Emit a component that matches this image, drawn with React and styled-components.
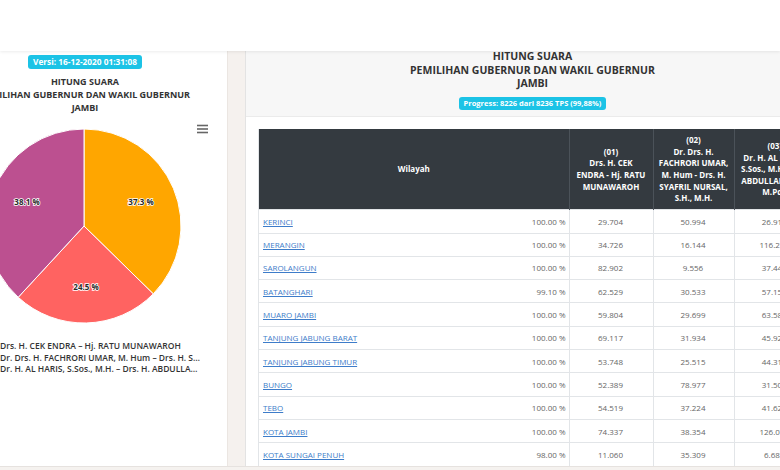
import React from "react";
import styled, { createGlobalStyle } from "styled-components";

const GlobalStyle = createGlobalStyle`
  *, *::before, *::after {
    box-sizing: border-box;
  }
  html, body {
    margin: 0;
    padding: 0;
    background: #f5f2ef;
    font-family: "Open Sans", "Liberation Sans", sans-serif;
    overflow: hidden;
  }
`;

const Page = styled.div`
  width: 780px;
  height: 470px;
  overflow: hidden;
`;

const TopBar = styled.div`
  height: 51px;
  background: #ffffff;
  box-shadow: 0 1px 3px rgba(0, 0, 0, 0.08);
  position: relative;
  z-index: 2;
`;

const Main = styled.div`
  display: flex;
  height: 416px;
  border-bottom: 1px solid #e6e2df;
`;

const LeftPanel = styled.div`
  flex: 0 0 228px;
  background: #ffffff;
  border-right: 1px solid #ebe6e2;
  overflow: hidden;
`;

const LeftInner = styled.div`
  width: 284px;
  margin-left: -57px;
  display: flex;
  flex-direction: column;
  align-items: center;
`;

const Badge = styled.div`
  background: #1cc3e6;
  color: #ffffff;
  font-weight: 700;
  font-size: ${(p) => p.size || 8}px;
  line-height: ${(p) => p.h || 14}px;
  padding: 0 5px;
  border-radius: 3px;
  margin-top: ${(p) => p.top || 0}px;
  white-space: nowrap;
`;

const Title = styled.div`
  text-align: center;
  font-weight: 700;
  color: #333333;
  font-size: ${(p) => p.size}px;
  line-height: ${(p) => p.lh}px;
  margin-top: ${(p) => p.top || 0}px;
  white-space: nowrap;
`;

const Chart = styled.svg`
  display: block;
`;

const Legend = styled.div`
  align-self: flex-start;
  padding-left: 44px;
  margin-top: 6px;
`;

const LegendItem = styled.div`
  display: flex;
  align-items: center;
  gap: 4px;
  height: 11.5px;
`;

const Dot = styled.span`
  width: 9px;
  height: 9px;
  border-radius: 50%;
  background: ${(p) => p.color};
  flex: 0 0 9px;
`;

const LegendText = styled.span`
  max-width: 200px;
  overflow: hidden;
  text-overflow: ellipsis;
  white-space: nowrap;
  font-size: 8.5px;
  font-weight: 600;
  color: #333333;
`;

const Gutter = styled.div`
  flex: 0 0 17px;
  background: #f5f1ee;
`;

const Card = styled.div`
  flex: 0 0 574px;
  background: #ffffff;
  border-left: 1px solid #e3e3e3;
  display: flex;
  flex-direction: column;
`;

const CardHeader = styled.div`
  height: 66px;
  background: #f7f7f7;
  border-bottom: 1px solid #ebebeb;
  display: flex;
  flex-direction: column;
  align-items: center;
`;

const CardBody = styled.div`
  padding: 12px 0 0 12px;
`;

const TableFrame = styled.div`
  border-left: 1px solid #e2e5e8;
`;

const Table = styled.table`
  border-collapse: collapse;
  table-layout: fixed;
  width: 556px;
  font-size: 8px;
`;

const Th = styled.th`
  background: #343a40;
  color: #ffffff;
  font-weight: 700;
  line-height: 11.6px;
  text-align: center;
  vertical-align: middle;
  padding: 0 3px;
  border-left: 1px solid #4b5259;
  &:first-child {
    border-left: none;
  }
`;

const HeadRow = styled.tr`
  height: 81px;
`;

const Row = styled.tr`
  height: 23.3px;
`;

const Td = styled.td`
  border-top: 1px solid #e2e5e8;
  border-left: ${(p) => (p.split ? "1px solid #e2e5e8" : "none")};
  text-align: ${(p) => p.align || "center"};
  padding: 0 ${(p) => (p.align === "right" ? 3 : 5)}px 0 4px;
  color: #666666;
  white-space: nowrap;
  overflow: hidden;
  vertical-align: middle;
`;

const NameLink = styled.a`
  color: #3d7cc9;
  text-decoration: underline;
  text-decoration-skip-ink: none;
`;

const slices = [
  { value: 37.3, color: "#ffa600", label: "37.3 %", lx: 198, ly: 89 },
  { value: 24.5, color: "#ff6361", label: "24.5 %", lx: 143, ly: 174 },
  { value: 38.1, color: "#bc5090", label: "38.1 %", lx: 84, ly: 89 },
];

const candidates = [
  { color: "#ffa600", name: "Drs. H. CEK ENDRA – Hj. RATU MUNAWAROH" },
  { color: "#ff6361", name: "Dr. Drs. H. FACHRORI UMAR, M. Hum – Drs. H. SYAFRIL NURSAL, S.H., M.H." },
  { color: "#bc5090", name: "Dr. H. AL HARIS, S.Sos., M.H. – Drs. H. ABDULLAH SANI, M.Pd.I" },
];

const rows = [
  ["KERINCI", "100.00 %", "29.704", "50.994", "26.911"],
  ["MERANGIN", "100.00 %", "34.726", "16.144", "116.270"],
  ["SAROLANGUN", "100.00 %", "82.902", "9.556", "37.443"],
  ["BATANGHARI", "99.10 %", "62.529", "30.533", "57.152"],
  ["MUARO JAMBI", "100.00 %", "59.804", "29.699", "63.584"],
  ["TANJUNG JABUNG BARAT", "100.00 %", "69.117", "31.934", "45.921"],
  ["TANJUNG JABUNG TIMUR", "100.00 %", "53.748", "25.515", "44.310"],
  ["BUNGO", "100.00 %", "52.389", "78.977", "31.506"],
  ["TEBO", "100.00 %", "54.519", "37.224", "41.627"],
  ["KOTA JAMBI", "100.00 %", "74.337", "38.354", "126.077"],
  ["KOTA SUNGAI PENUH", "98.00 %", "11.060", "35.309", "6.687"],
];

const Pie = () => {
  const cx = 141;
  const cy = 112;
  const r = 97;
  const total = slices.reduce((s, d) => s + d.value, 0);
  let start = 0;
  const pt = (a) => [cx + r * Math.sin(a), cy - r * Math.cos(a)];
  return (
    <Chart width="284" height="220" viewBox="0 0 284 220">
      {slices.map((d) => {
        const a0 = start;
        const a1 = start + (d.value / total) * Math.PI * 2;
        start = a1;
        const [x0, y0] = pt(a0);
        const [x1, y1] = pt(a1);
        const large = a1 - a0 > Math.PI ? 1 : 0;
        return (
          <path
            key={d.label}
            d={`M${cx} ${cy} L${x0} ${y0} A${r} ${r} 0 ${large} 1 ${x1} ${y1} Z`}
            fill={d.color}
            stroke="#ffffff"
            strokeWidth="1"
          />
        );
      })}
      {slices.map((d) => (
        <text
          key={"t" + d.label}
          x={d.lx}
          y={d.ly}
          textAnchor="middle"
          dominantBaseline="middle"
          fontSize="8"
          fontWeight="700"
          fill="#2a2a2a"
          stroke="#ffffff"
          strokeWidth="1.6"
          paintOrder="stroke"
          fontFamily="Open Sans, sans-serif"
        >
          {d.label}
        </text>
      ))}
      <g stroke="#666666" strokeWidth="1.6">
        <line x1="254" y1="11.5" x2="265" y2="11.5" />
        <line x1="254" y1="15" x2="265" y2="15" />
        <line x1="254" y1="18.5" x2="265" y2="18.5" />
      </g>
    </Chart>
  );
};

export default function App() {
  return (
    <Page>
      <GlobalStyle />
      <TopBar />
      <Main>
        <LeftPanel>
          <LeftInner>
            <Badge top={4} size={8.3}>Versi: 16-12-2020 01:31:08</Badge>
            <Title size={9} lh={13} top={6}>
              HITUNG SUARA
              <br />
              PEMILIHAN GUBERNUR DAN WAKIL GUBERNUR
              <br />
              JAMBI
            </Title>
            <Pie />
            <Legend>
              {candidates.map((c) => (
                <LegendItem key={c.name}>
                  <Dot color={c.color} />
                  <LegendText>{c.name}</LegendText>
                </LegendItem>
              ))}
            </Legend>
          </LeftInner>
        </LeftPanel>
        <Gutter />
        <Card>
          <CardHeader>
            <Title size={10.5} lh={13.5} top={-1}>
              HITUNG SUARA
              <br />
              PEMILIHAN GUBERNUR DAN WAKIL GUBERNUR
              <br />
              JAMBI
            </Title>
            <Badge top={6} size={7.5} h={13}>
              Progress: 8226 dari 8236 TPS (99,88%)
            </Badge>
          </CardHeader>
          <CardBody>
            <TableFrame>
              <Table>
                <colgroup>
                  <col style={{ width: 229 }} />
                  <col style={{ width: 81 }} />
                  <col style={{ width: 84 }} />
                  <col style={{ width: 81 }} />
                  <col style={{ width: 81 }} />
                </colgroup>
                <thead>
                  <HeadRow>
                    <Th colSpan={2}>Wilayah</Th>
                    <Th>
                      (01)
                      <br />
                      Drs. H. CEK
                      <br />
                      ENDRA - Hj. RATU
                      <br />
                      MUNAWAROH
                    </Th>
                    <Th>
                      (02)
                      <br />
                      Dr. Drs. H.
                      <br />
                      FACHRORI UMAR,
                      <br />
                      M. Hum - Drs. H.
                      <br />
                      SYAFRIL NURSAL,
                      <br />
                      S.H., M.H.
                    </Th>
                    <Th>
                      (03)
                      <br />
                      Dr. H. AL HARIS,
                      <br />
                      S.Sos., M.H. - Drs.
                      <br />
                      ABDULLAH SANI,
                      <br />
                      M.Pd.I
                    </Th>
                  </HeadRow>
                </thead>
                <tbody>
                  {rows.map((r) => (
                    <Row key={r[0]}>
                      <Td align="left">
                        <NameLink href="#">{r[0]}</NameLink>
                      </Td>
                      <Td align="right">{r[1]}</Td>
                      <Td split>{r[2]}</Td>
                      <Td split>{r[3]}</Td>
                      <Td split>{r[4]}</Td>
                    </Row>
                  ))}
                </tbody>
              </Table>
            </TableFrame>
          </CardBody>
        </Card>
      </Main>
    </Page>
  );
}
